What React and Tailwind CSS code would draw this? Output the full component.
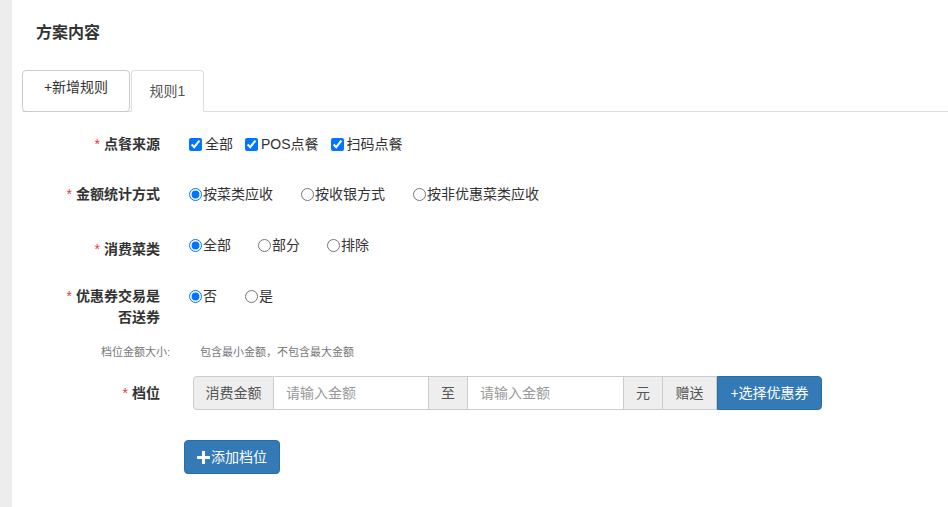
import React from 'react';

const font = { fontFamily: '"Liberation Sans", "Noto Sans CJK SC", sans-serif' };

const Label = ({ children, className = '' }) => (
    <div className={`w-[148px] shrink-0 text-right text-[14px] font-bold text-[#333] ${className}`}>
        <span className="text-[#e4393c] font-normal mr-[4px]">*</span>
        {children}
    </div>
);

const Radio = ({ label, checked, name }) => (
    <label className="flex items-center text-[14px] text-[#333]">
        <input type="radio" name={name} defaultChecked={checked} className="w-[13px] h-[13px] mr-[1px]" />
        <span>{label}</span>
    </label>
);

const Check = ({ label }) => (
    <label className="flex items-center text-[14px] text-[#333]">
        <input type="checkbox" defaultChecked className="w-[13px] h-[13px] mr-[3px]" />
        <span>{label}</span>
    </label>
);

const Addon = ({ children, className = '' }) => (
    <div className={`h-full flex items-center justify-center bg-[#eee] border border-[#ccc] text-[14px] text-[#555] ${className}`}>
        {children}
    </div>
);

export default function App() {
    return (
        <div className="flex min-h-[507px] bg-[#ededed]" style={font}>
            <div className="w-[12px] shrink-0" />
            <div className="flex-1 bg-white">
                <div className="h-[70px] pl-[24px] pt-[22px] text-[16px] font-bold text-[#333] leading-[22px]">方案内容</div>

                {/* tabs */}
                <div className="ml-[10px] h-[42px] flex border-b border-[#ddd]">
                    <div className="w-[108px] h-[42px] border border-[#ccc] rounded-[4px] text-center pt-[6px] text-[14px] text-[#333] leading-[20px]">
                        +新增规则
                    </div>
                    <div className="ml-[1px] w-[73px] h-[42px] -mb-px border border-[#ddd] border-b-white rounded-t-[4px] bg-white text-center pt-[10px] text-[14px] text-[#555] leading-[20px]">
                        规则1
                    </div>
                </div>

                {/* 点餐来源 */}
                <div className="mt-[18px] flex h-[28px] leading-[28px]">
                    <Label>点餐来源</Label>
                    <div className="ml-[29px] flex gap-[12px]">
                        <Check label="全部" />
                        <Check label="POS点餐" />
                        <Check label="扫码点餐" />
                    </div>
                </div>

                {/* 金额统计方式 */}
                <div className="mt-[22px] flex h-[28px] leading-[28px]">
                    <Label>金额统计方式</Label>
                    <div className="ml-[29px] flex gap-[28px]">
                        <Radio name="m" label="按菜类应收" checked />
                        <Radio name="m" label="按收银方式" />
                        <Radio name="m" label="按非优惠菜类应收" />
                    </div>
                </div>

                {/* 消费菜类 */}
                <div className="mt-[23px] flex h-[32px] leading-[28px]">
                    <Label className="pt-[4px]">消费菜类</Label>
                    <div className="ml-[29px] flex gap-[27px] h-[28px]">
                        <Radio name="c" label="全部" checked />
                        <Radio name="c" label="部分" />
                        <Radio name="c" label="排除" />
                    </div>
                </div>

                {/* 优惠券 */}
                <div className="mt-[23px] flex leading-[21px]">
                    <Label>优惠券交易是<br />否送券</Label>
                    <div className="ml-[29px] flex gap-[28px] h-[21px]">
                        <Radio name="q" label="否" checked />
                        <Radio name="q" label="是" />
                    </div>
                </div>

                {/* hint */}
                <div className="mt-[16px] flex text-[11px] leading-[16px] text-[#777]">
                    <div className="pl-[89px] w-[188px]">档位金额大小:</div>
                    <div>包含最小金额，不包含最大金额</div>
                </div>

                {/* 档位 */}
                <div className="mt-[16px] flex items-center h-[34px]">
                    <Label>档位</Label>
                    <div className="ml-[33px] flex h-[34px]">
                        <Addon className="w-[81px] rounded-l-[4px]">消费金额</Addon>
                        <input
                            placeholder="请输入金额"
                            className="w-[154px] h-full border-y border-[#ccc] px-[12px] text-[14px] outline-none placeholder:text-[#999]"
                        />
                        <Addon className="w-[40px]">至</Addon>
                        <input
                            placeholder="请输入金额"
                            className="w-[155px] h-full border-y border-[#ccc] px-[12px] text-[14px] outline-none placeholder:text-[#999]"
                        />
                        <Addon className="w-[40px]">元</Addon>
                        <Addon className="w-[54px] border-l-0">赠送</Addon>
                        <button className="w-[105px] h-full bg-[#337ab7] border border-[#2e6da4] rounded-r-[4px] text-white text-[14px]">
                            +选择优惠券
                        </button>
                    </div>
                </div>

                <div className="mt-[30px] pl-[172px]">
                    <button className="w-[96px] h-[34px] bg-[#337ab7] border border-[#2e6da4] rounded-[4px] text-white text-[14px] flex items-center justify-center">
                        <svg width="13" height="13" viewBox="0 0 13 13" className="mr-[1px]">
                            <path d="M5 0h3v5h5v3H8v5H5V8H0V5h5z" fill="white" />
                        </svg>
                        添加档位
                    </button>
                </div>
            </div>
        </div>
    );
}
